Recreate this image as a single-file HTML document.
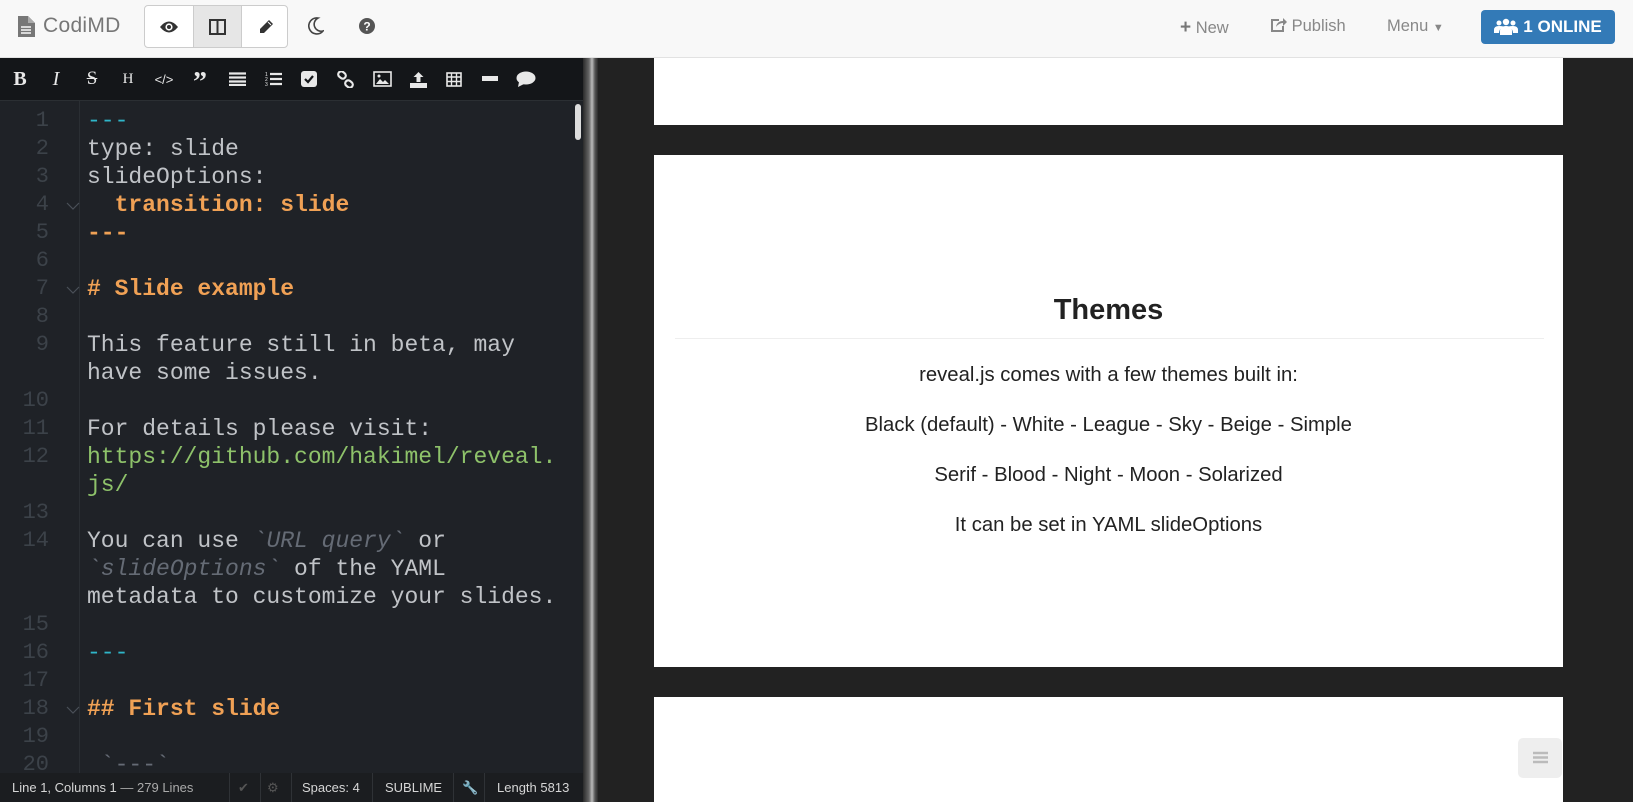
<!DOCTYPE html>
<html><head><meta charset="utf-8"><style>
*{margin:0;padding:0;box-sizing:border-box}
body{width:1633px;height:802px;overflow:hidden;background:#222;font-family:"Liberation Sans",sans-serif;position:relative}
.abs{position:absolute}
#hdr{left:0;top:0;width:1633px;height:58px;background:#f8f8f8;border-bottom:1px solid #e2e2e2}
.grp{left:144px;top:5px;width:144px;height:43px;border:1px solid #ccc;border-radius:4px;background:#fff;overflow:hidden}
.grp div{position:absolute;top:0;height:41px;width:48px;display:flex;align-items:center;justify-content:center}
.nav{color:#888;font-size:16.5px;top:17px}
#online{left:1481px;top:10px;width:134px;height:34px;background:#337ab7;border-radius:4px;color:#fff;font-weight:bold;font-size:17px;display:flex;align-items:center;justify-content:center;gap:5px}
#tb{left:0;top:58px;width:583px;height:43px;background:#141619;border-bottom:1px solid #2b2f33}
.ti{position:absolute;top:8px;width:24px;height:26px;color:#e8e8e8;display:flex;align-items:center;justify-content:center;font-size:17px}
#ed{left:0;top:101px;width:583px;height:672px;background:#1f2227;overflow:hidden}
#gut{left:79px;top:0;width:1px;height:672px;background:#2a2e33}
.ln{position:absolute;left:0;width:49px;text-align:right;color:#3c4249;font-family:"Liberation Mono",monospace;font-size:22px;line-height:28px}
.cl{position:absolute;left:87px;color:#c0c3c7;font-family:"Liberation Mono",monospace;font-size:23px;line-height:28px;white-space:pre}
.o{color:#f0a155;font-weight:bold}.c{color:#2fb6c9}.g{color:#8ec26a}.i{color:#656b75;font-style:italic}
.fold{position:absolute;left:66px;width:14px;height:8px}
#sb{left:0;top:773px;width:583px;height:29px;background:#1b1d20;color:#d6d6d6;font-size:13px;font-family:"Liberation Sans",sans-serif}
#sb span{position:absolute;top:7px}
.sep{position:absolute;top:0;width:1px;height:29px;background:#2f3236}
#div{left:583px;top:58px;width:15px;height:744px;background:linear-gradient(90deg,#2a2a2a,#666 40%,#bbb 60%,#555 80%,#2a2a2a)}
.slide{left:654px;width:909px;background:#fff}
.st{position:absolute;left:0;width:909px;text-align:center;color:#222;font-size:20.3px}
#scr{left:575px;top:104px;width:6px;height:36px;background:#ddd;border-radius:3px}
</style></head><body>
<div id="hdr" class="abs">
 <svg class="abs" style="left:18px;top:15px" width="17" height="23" viewBox="0 0 17 23"><path d="M0 1h10l7 7v14H0z" fill="#777"/><path d="M10 1v7h7" fill="#aaa"/><path d="M3 12h10M3 15h10M3 18h10" stroke="#f8f8f8" stroke-width="1.5"/></svg>
 <div class="abs" style="left:43px;top:14px;font-size:21px;color:#777;letter-spacing:.3px">CodiMD</div>
 <div class="grp abs">
  <div style="left:0"><svg width="20" height="14" viewBox="0 0 20 14"><path d="M1 7Q10-4 19 7Q10 18 1 7z" fill="#333"/><circle cx="10" cy="7" r="3.6" fill="#fff"/><circle cx="10" cy="7" r="2" fill="#333"/></svg></div>
  <div style="left:48px;background:#e6e6e6;border-left:1px solid #ccc;border-right:1px solid #ccc;width:49px"><svg width="17" height="16" viewBox="0 0 17 16"><rect x="1" y="1" width="15" height="14" fill="none" stroke="#333" stroke-width="2"/><path d="M8.5 1v14" stroke="#333" stroke-width="2"/></svg></div>
  <div style="left:97px"><svg width="16" height="16" viewBox="0 0 16 16"><path d="M11 1l4 4-9 9H2v-4z" fill="#333"/><path d="M10 3l3 3" stroke="#fff" stroke-width="1"/></svg></div>
 </div>
 <svg class="abs" style="left:308px;top:17px" width="16" height="18" viewBox="0 0 16 18"><path d="M10 1A8 8 0 1 0 15 14A7 7 0 0 1 10 1z" fill="none" stroke="#444" stroke-width="1.6"/></svg>
 <svg class="abs" style="left:359px;top:18px" width="16" height="16" viewBox="0 0 16 16"><circle cx="8" cy="8" r="8" fill="#555"/><text x="8" y="12.5" font-size="12" font-weight="bold" fill="#fff" text-anchor="middle" font-family="Liberation Sans">?</text></svg>
 <div class="abs nav" style="left:1180px"><b style="font-size:19px;color:#777">+</b> New</div>
 <div class="abs nav" style="left:1270px"><svg width="17" height="15" viewBox="0 0 17 15" style="vertical-align:-1px"><path d="M9 3H2v11h11V9" fill="none" stroke="#888" stroke-width="2"/><path d="M6 10Q7 4 13 4V1l4 4-4 4V6Q9 6 6 10z" fill="#888"/></svg> Publish</div>
 <div class="abs nav" style="left:1387px">Menu <span style="font-size:11px">▼</span></div>
 <div id="online" class="abs"><svg width="24" height="18" viewBox="0 0 24 18"><circle cx="12" cy="4" r="3.2" fill="#fff"/><circle cx="5" cy="5" r="2.5" fill="#fff"/><circle cx="19" cy="5" r="2.5" fill="#fff"/><path d="M6 17v-4q0-5 6-5t6 5v4z" fill="#fff"/><path d="M0 15v-3q0-4 5-4t4 1q-4 2-4 6z M24 15v-3q0-4-5-4t-4 1q4 2 4 6z" fill="#fff"/></svg>1 ONLINE</div>
</div>

<div id="tb" class="abs">
 <div class="ti" style="left:8px;font-family:'Liberation Serif';font-weight:bold;font-size:20px">B</div>
 <div class="ti" style="left:44px;font-family:'Liberation Serif';font-style:italic;font-size:20px">I</div>
 <div class="ti" style="left:80px;font-family:'Liberation Serif';font-size:19px;text-decoration:line-through">S</div>
 <div class="ti" style="left:116px;font-family:'Liberation Serif';font-size:15px">H</div>
 <div class="ti" style="left:152px;font-size:13px">&lt;/&gt;</div>
 <div class="ti" style="left:188px;font-family:'Liberation Serif';font-weight:bold;font-size:28px;top:12px">”</div>
 <div class="ti" style="left:225px"><svg width="17" height="14"><path d="M0 1.5h17M0 5.5h17M0 9.5h17M0 13h17" stroke="#e8e8e8" stroke-width="2.2"/></svg></div>
 <div class="ti" style="left:261px"><svg width="17" height="16"><text x="0" y="5" font-size="5" fill="#e8e8e8">1</text><text x="0" y="10" font-size="5" fill="#e8e8e8">2</text><text x="0" y="15" font-size="5" fill="#e8e8e8">3</text><path d="M5 3h12M5 8h12M5 13h12" stroke="#e8e8e8" stroke-width="2.2"/></svg></div>
 <div class="ti" style="left:297px"><svg width="16" height="16"><rect width="16" height="16" rx="3" fill="#e8e8e8"/><path d="M4 8l3 3 5-6" stroke="#141619" stroke-width="2.2" fill="none"/></svg></div>
 <div class="ti" style="left:333px"><svg width="17" height="17"><rect x="1" y="1" width="8" height="6" rx="3" transform="rotate(40 5 4)" fill="none" stroke="#e8e8e8" stroke-width="2.2"/><rect x="8" y="10" width="8" height="6" rx="3" transform="rotate(40 12 13)" fill="none" stroke="#e8e8e8" stroke-width="2.2"/></svg></div>
 <div class="ti" style="left:370px"><svg width="19" height="16"><rect x="1" y="1" width="17" height="14" fill="none" stroke="#e8e8e8" stroke-width="1.6"/><path d="M3 13l4-5 3 3 2-2 4 4z" fill="#e8e8e8"/><circle cx="6" cy="5" r="1.5" fill="#e8e8e8"/></svg></div>
 <div class="ti" style="left:406px"><svg width="17" height="17"><path d="M8.5 1l5 5h-3v5h-4V6h-3z M0 12h17v5H0z" fill="#e8e8e8"/></svg></div>
 <div class="ti" style="left:442px"><svg width="16" height="15"><rect x="1" y="1" width="14" height="13" fill="none" stroke="#e8e8e8" stroke-width="1.6"/><path d="M1 5h14M1 9.5h14M5.5 1v13M10.5 1v13" stroke="#e8e8e8" stroke-width="1.4"/></svg></div>
 <div class="ti" style="left:478px"><svg width="16" height="6"><rect width="16" height="5" fill="#e8e8e8"/></svg></div>
 <div class="ti" style="left:514px"><svg width="20" height="16"><ellipse cx="10" cy="7" rx="9.5" ry="6.5" fill="#e8e8e8"/><path d="M3 11l-1 5 6-3z" fill="#e8e8e8"/></svg></div>
</div>

<div id="ed" class="abs">
 <div id="gut" class="abs"></div>
 <div class="ln" style="top:6px">1</div><div class="cl c" style="top:6px">---</div>
 <div class="ln" style="top:34px">2</div><div class="cl" style="top:34px">type: slide</div>
 <div class="ln" style="top:62px">3</div><div class="cl" style="top:62px">slideOptions:</div>
 <div class="ln" style="top:90px">4</div><div class="cl o" style="top:90px">  transition: slide</div>
 <div class="ln" style="top:118px">5</div><div class="cl o" style="top:118px">---</div>
 <div class="ln" style="top:146px">6</div>
 <div class="ln" style="top:174px">7</div><div class="cl o" style="top:174px"># Slide example</div>
 <div class="ln" style="top:202px">8</div>
 <div class="ln" style="top:230px">9</div><div class="cl" style="top:230px">This feature still in beta, may
have some issues.</div>
 <div class="ln" style="top:286px">10</div>
 <div class="ln" style="top:314px">11</div><div class="cl" style="top:314px">For details please visit:</div>
 <div class="ln" style="top:342px">12</div><div class="cl g" style="top:342px">https://github.com/hakimel/reveal.
js/</div>
 <div class="ln" style="top:398px">13</div>
 <div class="ln" style="top:426px">14</div><div class="cl" style="top:426px">You can use <span class="i">`URL query`</span> or
<span class="i">`slideOptions`</span> of the YAML
metadata to customize your slides.</div>
 <div class="ln" style="top:510px">15</div>
 <div class="ln" style="top:538px">16</div><div class="cl c" style="top:538px">---</div>
 <div class="ln" style="top:566px">17</div>
 <div class="ln" style="top:594px">18</div><div class="cl o" style="top:594px">## First slide</div>
 <div class="ln" style="top:622px">19</div>
 <div class="ln" style="top:650px">20</div><div class="cl i" style="top:650px;font-style:normal"> `---`</div>
 <svg class="fold" style="top:101px" viewBox="0 0 14 8"><path d="M1 1l6 6 6-6" stroke="#4a5058" fill="none" stroke-width="1.2"/></svg>
 <svg class="fold" style="top:185px" viewBox="0 0 14 8"><path d="M1 1l6 6 6-6" stroke="#4a5058" fill="none" stroke-width="1.2"/></svg>
 <svg class="fold" style="top:605px" viewBox="0 0 14 8"><path d="M1 1l6 6 6-6" stroke="#4a5058" fill="none" stroke-width="1.2"/></svg>
</div>
<div id="scr" class="abs"></div>

<div id="sb" class="abs">
 <span style="left:12px">Line 1, Columns 1 <span style="position:static;color:#aaa">— 279 Lines</span></span>
 <div class="sep" style="left:229px"></div>
 <span style="left:238px;color:#555">✔</span>
 <div class="sep" style="left:260px"></div>
 <span style="left:267px;color:#555">⚙</span>
 <div class="sep" style="left:291px"></div>
 <span style="left:302px">Spaces: 4</span>
 <div class="sep" style="left:372px"></div>
 <span style="left:385px">SUBLIME</span>
 <div class="sep" style="left:453px"></div>
 <span style="left:462px">🔧</span>
 <div class="sep" style="left:484px"></div>
 <span style="left:497px">Length 5813</span>
</div>

<div id="div" class="abs"></div>

<div class="slide abs" style="top:58px;height:67px"></div>
<div class="slide abs" style="top:155px;height:512px">
 <div class="abs" style="left:0;top:139px;width:909px;text-align:center;font-size:29px;font-weight:bold;color:#222">Themes</div>
 <div class="abs" style="left:21px;top:183px;width:869px;height:1px;background:#eee"></div>
 <div class="st" style="top:209px">reveal.js comes with a few themes built in:</div>
 <div class="st" style="top:259px">Black (default) - White - League - Sky - Beige - Simple</div>
 <div class="st" style="top:309px">Serif - Blood - Night - Moon - Solarized</div>
 <div class="st" style="top:359px">It can be set in YAML slideOptions</div>
</div>
<div class="slide abs" style="top:697px;height:105px"></div>
<div class="abs" style="left:1518px;top:738px;width:44px;height:40px;background:#eee;border-radius:5px"><svg style="position:absolute;left:15px;top:13px" width="15" height="13"><path d="M0 2h15M0 6.5h15M0 11h15" stroke="#bbb" stroke-width="2.5"/></svg></div>
</body></html>
